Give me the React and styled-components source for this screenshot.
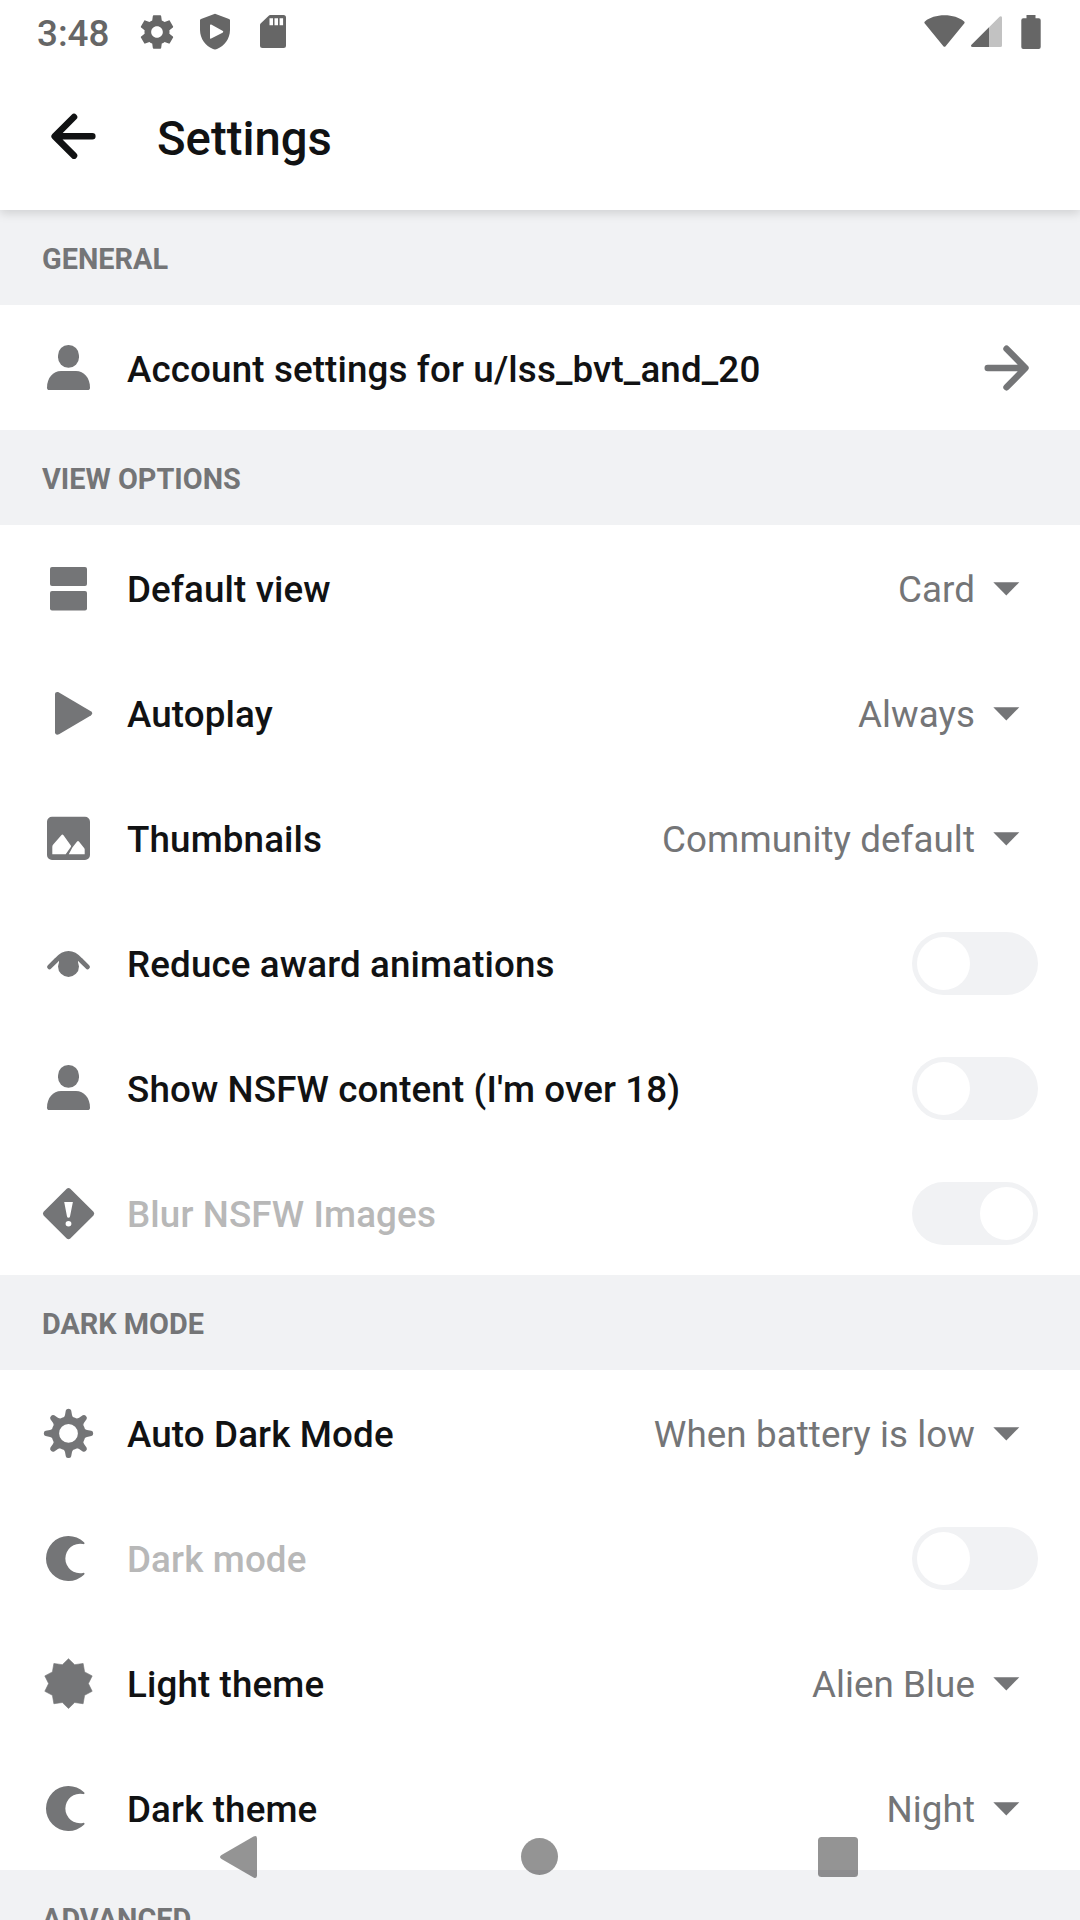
import React from "react";
import styled, { createGlobalStyle, ThemeProvider } from "styled-components";

const theme = {
  surface: "#ffffff",
  band: "#f1f2f4",
  ink: "#111213",
  muted: "#747577",
  disabled: "#b8b8b8",
  status: "#666666",
};

const GlobalStyle = createGlobalStyle`
  * { box-sizing: border-box; }
  body {
    margin: 0;
    overflow: hidden;
    background: #fff;
    font-family: Roboto, "Liberation Sans", sans-serif;
  }
  svg { display: block; flex: none; overflow: visible; }
`;

const Screen = styled.main`
  position: relative;
  display: flex;
  flex-direction: column;
  width: 1080px;
  height: 1920px;
  overflow: hidden;
  background: ${({ theme }) => theme.surface};
`;

const StatusBar = styled.div`
  display: flex;
  flex: none;
  align-items: center;
  justify-content: space-between;
  height: 63px;
  padding: 0 39px 0 37px;
  color: ${({ theme }) => theme.status};
`;

const StatusGroup = styled.div`
  display: flex;
  align-items: center;
`;

const StatusSlot = styled.span`
  display: flex;
  margin-left: ${({ $gap }) => $gap}px;
`;

const Clock = styled.span`
  width: 80px;
  padding-top: 4px;
  font-size: 36.75px;
  font-weight: 490;
  line-height: 44px;
  white-space: nowrap;
`;

const AppBar = styled.header`
  position: relative;
  z-index: 1;
  display: flex;
  flex: none;
  align-items: center;
  gap: 52px;
  height: 147px;
  padding: 0 42px;
  color: ${({ theme }) => theme.ink};
  background: ${({ theme }) => theme.surface};
  box-shadow: 0 3px 10px rgba(0, 0, 0, 0.15);
  clip-path: inset(0 0 -16px 0);
`;

const Title = styled.h1`
  margin: 0;
  padding-top: 5px;
  font-size: 47.25px;
  font-weight: 490;
  line-height: 56px;
`;

const SettingsList = styled.div`
  display: flex;
  flex-direction: column;
`;

const SectionHeader = styled.h2`
  display: flex;
  flex: none;
  align-items: center;
  height: 95px;
  margin: 0;
  padding: 3px 42px 0;
  color: ${({ theme }) => theme.muted};
  background: ${({ theme }) => theme.band};
  font-size: 28.875px;
  font-weight: 700;
  line-height: 34px;
  text-transform: uppercase;
`;

const Row = styled.div`
  display: flex;
  flex: none;
  align-items: center;
  height: 125px;
  padding: 0 42px;
  color: ${({ theme }) => theme.muted};
`;

const Label = styled.span`
  flex: 1;
  margin-left: 32px;
  padding-top: 4px;
  color: ${({ theme, $disabled }) => ($disabled ? theme.disabled : theme.ink)};
  font-size: 36.75px;
  font-weight: 490;
  letter-spacing: 0.13px;
  line-height: 44px;
  white-space: nowrap;
`;

const Value = styled.span`
  padding-top: 4px;
  font-size: 36.75px;
  letter-spacing: 0.08px;
  line-height: 44px;
  white-space: nowrap;
`;

const CaretSlot = styled.span`
  display: flex;
  padding: 3px 18px 0 18px;
`;

const ArrowSlot = styled.span`
  display: flex;
  padding-right: 5px;
`;

const Track = styled.span`
  display: flex;
  justify-content: ${({ $on }) => ($on ? "flex-end" : "flex-start")};
  width: 126px;
  height: 63px;
  margin-top: 1px;
  padding: 5px;
  border-radius: 32px;
  background: ${({ theme }) => theme.band};
`;

const Knob = styled.span`
  width: 53px;
  height: 53px;
  border-radius: 50%;
  background: ${({ theme }) => theme.surface};
`;

const NavBar = styled.nav`
  position: absolute;
  right: 0;
  bottom: 0;
  left: 0;
  display: flex;
  align-items: center;
  gap: 201px;
  height: 126px;
  padding-left: 189px;
  color: rgba(0, 0, 0, 0.42);
`;

const Icon = ({ children }) => (
  <svg width="53" height="53" viewBox="0 0 53 53" fill="currentColor">
    {children}
  </svg>
);

const PersonIcon = () => (
  <Icon>
    <rect x="16" y="4" width="21" height="22.8" rx="10.4" />
    <path d="M19 30h15c8 0 14 7 14 16.500 0 2-.8 2.500-2.400 2.500H7.400C5.800 49 5 48.500 5 46.500 5 37 11 30 19 30z" />
  </Icon>
);

const CardIcon = () => (
  <Icon>
    <rect x="8" y="6" width="37" height="19" rx="2" />
    <rect x="8" y="30" width="37" height="19.500" rx="2" />
  </Icon>
);

const PlayIcon = () => (
  <Icon>
    <path d="M13 8.500c0-2.200 2-3 4-1.900L48.800 25.300c2 1.200 2 2.900 0 4.100L17 48.200c-2 1.100-4 .3-4-1.900z" />
  </Icon>
);

const ImageIcon = () => (
  <Icon>
    <path
      fillRule="evenodd"
      d="M10 5.700h33a5 5 0 0 1 5 5V44a5 5 0 0 1-5 5H10a5 5 0 0 1-5-5V10.700a5 5 0 0 1 5-5z
      M10.300 43.300h13.400l5.100-7.300c.4-.6.4-1 0-1.600l-7.300-10.200c-.7-.9-1.500-.9-2.200 0L11 33.700c-.5.800-.7 1.300-.7 2.200z
      M26.800 43.300h15.900v-4.700c0-.7-.2-1.100-.6-1.600l-5-6.300c-.7-.9-1.500-.9-2.200 0l-4.500 5.900z"
    />
  </Icon>
);

const EyeIcon = () => (
  <Icon>
    <circle cx="26.500" cy="30.400" r="10.500" />
    <path
      d="M7.500 30.900L14.500 24Q26.500 10.700 38.500 24L45.500 30.900"
      fill="none"
      stroke="currentColor"
      strokeWidth="4.800"
      strokeLinecap="round"
      strokeLinejoin="round"
    />
    <path d="M17 23Q26.500 12 36 23v5H17z" />
  </Icon>
);

const WarningIcon = () => (
  <Icon>
    <path
      fillRule="evenodd"
      d="M24.700 2.700q1.800-1.500 3.600 0L51.500 25.800q1.500 1.800 0 3.600L28.300 52.500q-1.800 1.500-3.600 0L1.600 29.400q-1.500-1.800 0-3.600z
      M22.200 16l2.800 14.400q.3 1.300 1.500 1.300t1.500-1.300L30.900 16z
      M23.600 37.700a2.900 2.700 0 1 0 5.800 0a2.900 2.700 0 1 0-5.800 0z"
    />
  </Icon>
);

const SunIcon = () => (
  <Icon>
    <circle cx="26.500" cy="27.400" r="13.200" fill="none" stroke="currentColor" strokeWidth="7.600" />
    {[0, 45, 90, 135, 180, 225, 270, 315].map((angle) => (
      <path
        key={angle}
        transform={`translate(26.500 27.400) rotate(${angle})`}
        d="M-5-16Q-3.800-17-3.500-18.500L-2.700-22.800Q-2.300-24.700 0-24.700T2.700-22.800L3.500-18.500Q3.800-17 5-16z"
      />
    ))}
  </Icon>
);

const MoonIcon = () => (
  <Icon>
    <path d="M42 11.200A22.500 22.500 0 1 0 42 43.800C43 42.700 42.600 41.600 41 41.900A14.700 14.700 0 1 1 41 13.100C42.600 13.400 43 12.300 42 11.200z" />
  </Icon>
);

const starPoints = Array.from({ length: 20 }, (_, i) => {
  const radius = i % 2 ? 19.9 : 24.9;
  const angle = (Math.PI / 10) * i;
  return `${26.5 + radius * Math.sin(angle)},${27.6 - radius * Math.cos(angle)}`;
}).join(" ");

const StarburstIcon = () => (
  <Icon>
    <polygon points={starPoints} stroke="currentColor" strokeWidth="0.600" strokeLinejoin="round" />
  </Icon>
);

const ArrowIcon = () => (
  <Icon>
    <path
      d="M7.700 27H45M26.500 7.700L45.500 27L26.500 46.300"
      fill="none"
      stroke="currentColor"
      strokeWidth="6.400"
      strokeLinecap="round"
      strokeLinejoin="round"
    />
  </Icon>
);

const BackIcon = () => (
  <svg width="63" height="63" viewBox="0 0 63 63">
    <path
      d="M50.300 31.300H13M32 12L12.700 31.300L32 50.600"
      fill="none"
      stroke="currentColor"
      strokeWidth="6.600"
      strokeLinecap="round"
      strokeLinejoin="round"
    />
  </svg>
);

const CaretIcon = () => (
  <svg width="27" height="14" viewBox="0 0 27 14" fill="currentColor">
    <path d="M.3.300h26L13.300 13.400z" />
  </svg>
);

const GearStatusIcon = () => (
  <svg width="40" height="40" viewBox="0 0 24 24" fill="currentColor">
    <path d="M19.430 12.980c.04-.32.070-.64.070-.98s-.03-.66-.070-.98l2.110-1.650c.19-.15.24-.42.120-.64l-2-3.460c-.12-.22-.39-.3-.61-.22l-2.490 1c-.52-.4-1.080-.73-1.690-.98l-.38-2.650C14.460 2.180 14.250 2 14 2h-4c-.25 0-.46.180-.49.420l-.38 2.650c-.61.250-1.170.59-1.690.98l-2.490-1c-.23-.09-.49 0-.61.220l-2 3.460c-.13.220-.07.490.12.640l2.110 1.650c-.04.320-.07.650-.07.980s.03.660.070.980l-2.110 1.650c-.19.150-.24.420-.12.640l2 3.460c.12.220.39.300.61.220l2.490-1c.52.400 1.080.730 1.690.980l.38 2.650c.03.240.24.420.49.420h4c.25 0 .46-.18.490-.42l.38-2.650c.61-.25 1.170-.59 1.690-.98l2.490 1c.23.090.49 0 .61-.22l2-3.460c.12-.22.070-.49-.12-.64l-2.110-1.650zM12 15.500c-1.930 0-3.500-1.570-3.500-3.500s1.570-3.500 3.500-3.500 3.500 1.570 3.500 3.500-1.570 3.500-3.500 3.500z" />
  </svg>
);

const ShieldStatusIcon = () => (
  <svg width="30" height="37" viewBox="0 0 30 37" fill="currentColor">
    <path
      fillRule="evenodd"
      d="M15 .8L29 6q1 .4 1 1.500V17c0 9-6 16-12.500 18.800q-2.500 1.200-5 0C6 33 0 26 0 17V7.500Q0 6.400 1 6z
      M10 12.300v12.600c0 .8.600 1 1.200.7l11.300-5.900c1-.6 1-1.400 0-2L11.200 11.600c-.6-.3-1.200-.1-1.200.7z"
    />
  </svg>
);

const SdStatusIcon = () => (
  <svg width="26" height="33" viewBox="0 0 26 33" fill="currentColor">
    <path
      fillRule="evenodd"
      d="M10 0h13.500A2.500 2.500 0 0 1 26 2.500v28a2.500 2.500 0 0 1-2.500 2.500h-21A2.500 2.500 0 0 1 0 30.500V10q0-.8.600-1.400L9 .4Q9.400 0 10 0z
      M9.500 3.300v7H13v-7z M14.500 3.300v7H18v-7z M19.600 3.300v7h3.500v-7z"
    />
  </svg>
);

const WifiStatusIcon = () => (
  <svg width="41" height="33" viewBox="0 0 41 33" fill="currentColor">
    <path d="M20.500.3c8 0 14.700 2.200 19.300 5.900 1 .8 1.100 1.500.4 2.400L21.600 31.200q-1.100 1.100-2.200 0L.8 8.600c-.7-.9-.6-1.600.4-2.400C5.800 2.500 12.500.3 20.500.3z" />
  </svg>
);

const SignalStatusIcon = () => (
  <svg width="31" height="31" viewBox="0 0 31 31" fill="currentColor">
    <path d="M18 11.200L28.500.7C29.500-.3 31 .2 31 1.700V29.500q0 1.500-1.500 1.500H18z" opacity="0.400" />
    <path d="M18 11.200V31H1.500C0 31-.5 29.700.5 28.700z" />
  </svg>
);

const BatteryStatusIcon = () => (
  <svg width="20" height="34" viewBox="0 0 20 34" fill="currentColor">
    <path d="M5.500 0h9v3.300h3.200q2 0 2 2v26.700q0 2-2 2H2.300q-2 0-2-2V5.300q0-2 2-2h3.200z" />
  </svg>
);

const Caret = () => (
  <CaretSlot>
    <CaretIcon />
  </CaretSlot>
);

const SelectRow = ({ icon, label, value }) => (
  <Row>
    {icon}
    <Label>{label}</Label>
    <Value>{value}</Value>
    <Caret />
  </Row>
);

const ToggleRow = ({ icon, label, on, disabled }) => (
  <Row>
    {icon}
    <Label $disabled={disabled}>{label}</Label>
    <Track $on={on}>
      <Knob />
    </Track>
  </Row>
);

const LinkRow = ({ icon, label }) => (
  <Row>
    {icon}
    <Label>{label}</Label>
    <ArrowSlot>
      <ArrowIcon />
    </ArrowSlot>
  </Row>
);

export default function App() {
  return (
    <ThemeProvider theme={theme}>
      <GlobalStyle />
      <Screen>
        <StatusBar>
          <StatusGroup>
            <Clock>3:48</Clock>
            <StatusSlot $gap={20}>
              <GearStatusIcon />
            </StatusSlot>
            <StatusSlot $gap={23}>
              <ShieldStatusIcon />
            </StatusSlot>
            <StatusSlot $gap={30}>
              <SdStatusIcon />
            </StatusSlot>
          </StatusGroup>
          <StatusGroup>
            <WifiStatusIcon />
            <StatusSlot $gap={6}>
              <SignalStatusIcon />
            </StatusSlot>
            <StatusSlot $gap={19}>
              <BatteryStatusIcon />
            </StatusSlot>
          </StatusGroup>
        </StatusBar>
        <AppBar>
          <BackIcon />
          <Title>Settings</Title>
        </AppBar>
        <SettingsList>
          <SectionHeader>General</SectionHeader>
          <LinkRow icon={<PersonIcon />} label="Account settings for u/lss_bvt_and_20" />
          <SectionHeader>View options</SectionHeader>
          <SelectRow icon={<CardIcon />} label="Default view" value="Card" />
          <SelectRow icon={<PlayIcon />} label="Autoplay" value="Always" />
          <SelectRow icon={<ImageIcon />} label="Thumbnails" value="Community default" />
          <ToggleRow icon={<EyeIcon />} label="Reduce award animations" />
          <ToggleRow icon={<PersonIcon />} label="Show NSFW content (I'm over 18)" />
          <ToggleRow icon={<WarningIcon />} label="Blur NSFW Images" on disabled />
          <SectionHeader>Dark mode</SectionHeader>
          <SelectRow icon={<SunIcon />} label="Auto Dark Mode" value="When battery is low" />
          <ToggleRow icon={<MoonIcon />} label="Dark mode" disabled />
          <SelectRow icon={<StarburstIcon />} label="Light theme" value="Alien Blue" />
          <SelectRow icon={<MoonIcon />} label="Dark theme" value="Night" />
          <SectionHeader>Advanced</SectionHeader>
        </SettingsList>
        <NavBar>
          <svg width="100" height="126" viewBox="0 0 100 126" fill="currentColor">
            <path d="M32.500 61L64.500 42.600Q68 41 68 44.500V81.500Q68 85 64.500 83.400L32.500 65Q29.500 63 32.500 61z" />
          </svg>
          <svg width="100" height="126" viewBox="0 0 100 126" fill="currentColor">
            <circle cx="49.500" cy="62.500" r="18.500" />
          </svg>
          <svg width="100" height="126" viewBox="0 0 100 126" fill="currentColor">
            <rect x="27" y="43" width="40" height="40" rx="3.500" />
          </svg>
        </NavBar>
      </Screen>
    </ThemeProvider>
  );
}
